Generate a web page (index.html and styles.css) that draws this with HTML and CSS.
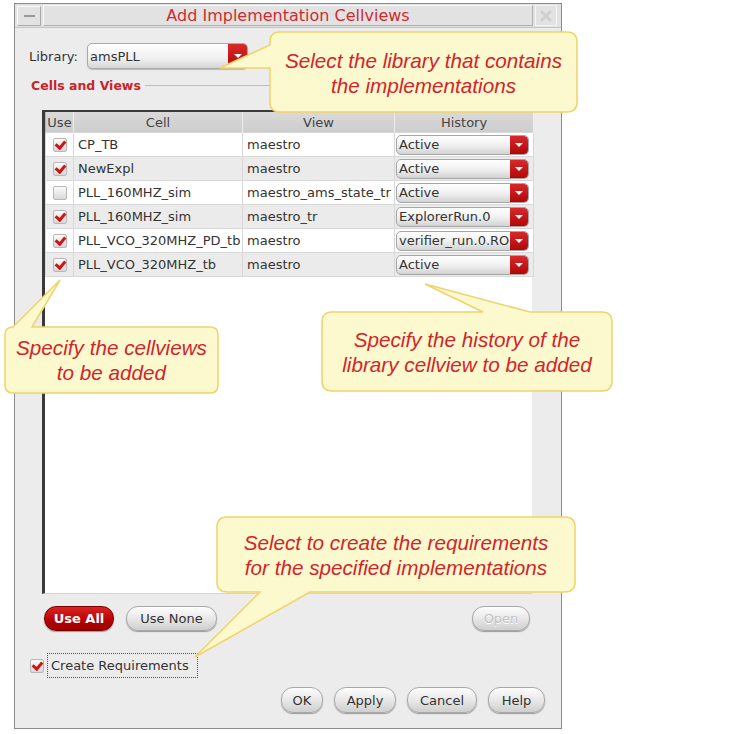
FILE: index.html
```html
<!DOCTYPE html>
<html lang="en">
<head>
    <meta charset="UTF-8">
    <title>Add Implementation Cellviews</title>
    <link rel="stylesheet" href="styles.css">
</head>
<body>
<div class="page">
    <div class="dialog">
        <div class="titlebar">
            <div class="min-btn"><span></span></div>
            <div class="title">Add Implementation Cellviews</div>
            <div class="close-btn">
                <svg width="20" height="20" viewBox="0 0 20 20"><path d="M5 5 L15 15 M15 5 L5 15" stroke="#cfcfcf" stroke-width="3"/></svg>
            </div>
        </div>

        <div class="lib-row">
            <span class="lib-label">Library:</span>
            <div class="combo">
                <span class="combo-text">amsPLL</span>
                <span class="arrow"></span>
            </div>
        </div>

        <div class="group-row">
            <span class="group-title">Cells and Views</span>
            <span class="group-line"></span>
        </div>

        <div class="table-wrap">
            <table class="cells">
                <tr>
                    <th class="c-use">Use</th>
                    <th class="c-cell">Cell</th>
                    <th class="c-view">View</th>
                    <th class="c-hist">History</th>
                </tr>
                <tr>
                    <td class="c-use"><span class="check on"></span></td>
                    <td>CP_TB</td>
                    <td>maestro</td>
                    <td class="c-hist"><div class="drop"><span>Active</span><span class="arrow"></span></div></td>
                </tr>
                <tr>
                    <td class="c-use"><span class="check on"></span></td>
                    <td>NewExpl</td>
                    <td>maestro</td>
                    <td class="c-hist"><div class="drop"><span>Active</span><span class="arrow"></span></div></td>
                </tr>
                <tr>
                    <td class="c-use"><span class="check"></span></td>
                    <td>PLL_160MHZ_sim</td>
                    <td>maestro_ams_state_tr</td>
                    <td class="c-hist"><div class="drop"><span>Active</span><span class="arrow"></span></div></td>
                </tr>
                <tr>
                    <td class="c-use"><span class="check on"></span></td>
                    <td>PLL_160MHZ_sim</td>
                    <td>maestro_tr</td>
                    <td class="c-hist"><div class="drop"><span>ExplorerRun.0</span><span class="arrow"></span></div></td>
                </tr>
                <tr>
                    <td class="c-use"><span class="check on"></span></td>
                    <td>PLL_VCO_320MHZ_PD_tb</td>
                    <td>maestro</td>
                    <td class="c-hist"><div class="drop"><span>verifier_run.0.RO</span><span class="arrow"></span></div></td>
                </tr>
                <tr>
                    <td class="c-use"><span class="check on"></span></td>
                    <td>PLL_VCO_320MHZ_tb</td>
                    <td>maestro</td>
                    <td class="c-hist"><div class="drop"><span>Active</span><span class="arrow"></span></div></td>
                </tr>
            </table>
        </div>

        <div class="btn-row">
            <button class="btn red use-all">Use All</button>
            <button class="btn use-none">Use None</button>
            <button class="btn disabled open">Open</button>
        </div>

        <div class="req-row">
            <span class="check on"></span>
            <span class="req-label">Create Requirements</span>
        </div>

        <div class="bottom-row">
            <button class="btn b-ok">OK</button>
            <button class="btn b-apply">Apply</button>
            <button class="btn b-cancel">Cancel</button>
            <button class="btn b-help">Help</button>
        </div>
    </div>

    <!-- callout bubbles -->
    <svg class="bubbles" width="750" height="734" viewBox="0 0 750 734">
        <path d="M280,32 H567 Q577,32 577,42 V102 Q577,112 567,112 H280 Q270,112 270,102 V68 L220,68 L270,45 V42 Q270,32 280,32 Z"/>
        <path d="M13,327 L60,280 L32,327 H210 Q218,327 218,335 V385 Q218,393 210,393 H13 Q5,393 5,385 V335 Q5,327 13,327 Z"/>
        <path d="M332,312 H483 L425,284 L530,312 H602 Q612,312 612,322 V381 Q612,391 602,391 H332 Q322,391 322,381 V322 Q322,312 332,312 Z"/>
        <path d="M227,517 H565 Q575,517 575,527 V582 Q575,592 565,592 H310 L195,657 L260,592 H227 Q217,592 217,582 V527 Q217,517 227,517 Z"/>
    </svg>
    <div class="note note-lib">Select the library that contains<br>the implementations</div>
    <div class="note note-cells">Specify the cellviews<br>to be added</div>
    <div class="note note-hist">Specify the history of the<br>library cellview to be added</div>
    <div class="note note-req">Select to create the requirements<br>for the specified implementations</div>
</div>
</body>
</html>
```

FILE: styles.css
```css
body {
    margin: 0;
    background: #fff;
    font-family: "DejaVu Sans", sans-serif;
    font-size: 13px;
    color: #333;
}
.page {
    position: relative;
    width: 750px;
    height: 734px;
    overflow: hidden;
}
.dialog {
    box-sizing: border-box;
    margin: 3px 0 0 14px;
    width: 548px;
    height: 726px;
    border: 1px solid #8c8c8c;
    background: #ececec;
    display: flex;
    flex-direction: column;
}
.titlebar {
    height: 24px;
    display: flex;
    align-items: stretch;
    background: #e2e2e2;
    border-bottom: 1px solid #c4c4c4;
    box-sizing: border-box;
}
.min-btn {
    width: 22px;
    margin: 2px 2px 1px 2px;
    border: 1px solid #fafafa;
    border-right-color: #a9a9a9;
    border-bottom-color: #a9a9a9;
    display: flex;
    align-items: center;
    justify-content: center;
}
.min-btn span {
    width: 11px;
    height: 2px;
    background: #9a9a9a;
}
.title {
    flex: 1;
    margin: 1px 0;
    border: 1px solid #f8f8f8;
    border-right-color: #b0b0b0;
    border-bottom-color: #b0b0b0;
    text-align: center;
    color: #cf2b2f;
    font-size: 16px;
    line-height: 20px;
}
.close-btn {
    width: 20px;
    margin: 1px 4px 1px 2px;
    border: 1px solid #f4f4f4;
    display: flex;
    align-items: center;
    justify-content: center;
}

.lib-row {
    margin-top: 15px;
    padding-left: 14px;
    height: 26px;
    display: flex;
    align-items: center;
}
.lib-label {
    width: 58px;
    color: #333;
}
.combo {
    box-sizing: border-box;
    width: 161px;
    height: 26px;
    border: 1px solid #a9a9a9;
    border-radius: 5px;
    background: linear-gradient(#ffffff, #f0f0f0 60%, #d6d6d6);
    display: flex;
    align-items: center;
    box-shadow: 0 1px 1px #bbb;
}
.combo-text {
    flex: 1;
    padding-left: 2px;
}
.arrow {
    position: relative;
    align-self: stretch;
    width: 19px;
    background: linear-gradient(#d92a2a, #b20606);
    border-radius: 0 4px 4px 0;
}
.arrow::after {
    content: "";
    position: absolute;
    left: 50%;
    top: 50%;
    margin: -2px 0 0 -4px;
    border-left: 4px solid transparent;
    border-right: 4px solid transparent;
    border-top: 4px solid #fff;
}

.group-row {
    margin-top: 9px;
    height: 14px;
    padding-left: 16px;
    display: flex;
    align-items: center;
}
.group-title {
    color: #c8242a;
    font-weight: bold;
    font-size: 12.5px;
}
.group-line {
    flex: 1;
    margin: 1px 6px 0 4px;
    border-top: 1px solid #bcbcbc;
}

.table-wrap {
    box-sizing: border-box;
    margin: 18px 0 0 27px;
    width: 490px;
    height: 484px;
    background: #fff;
    border-left: 3px solid #3a3a3a;
    border-top: 2px solid #3a3a3a;
    border-bottom: 1px solid #d4d4d4;
}
.cells {
    border-collapse: collapse;
    table-layout: fixed;
    width: 484px;
}
.cells th {
    height: 20px;
    padding: 0;
    background: linear-gradient(#d9d9d9, #cdcdcd);
    border-right: 1px solid #ededed;
    border-left: 1px solid #b4b4b4;
    font-weight: normal;
    color: #444;
    font-size: 13px;
}
.cells td {
    height: 23px;
    padding: 0 0 0 4px;
    border: 1px solid #d8d8d8;
    white-space: nowrap;
    overflow: hidden;
    color: #333;
}
.cells tr:nth-child(odd) td {
    background: #ebebeb;
}
.cells tr:nth-child(even) td {
    background: #fff;
}
.cells td.c-use {
    padding: 0;
    text-align: center;
    background: #e6e6e6;
}
.cells td.c-hist {
    padding: 0 1px;
}
.c-use { width: 27px; }
.c-cell { width: 168px; }
.c-view { width: 151px; }
.c-hist { width: 138px; }

.check {
    display: inline-block;
    position: relative;
    box-sizing: border-box;
    width: 14px;
    height: 14px;
    vertical-align: middle;
    border: 1px solid #b8b8b8;
    border-radius: 2px;
    background: linear-gradient(#fbfbfb, #d8d8d8);
}
.check.on::after {
    content: "";
    position: absolute;
    left: 3px;
    top: 0px;
    width: 4px;
    height: 7px;
    border-right: 3px solid #d01414;
    border-bottom: 3px solid #d01414;
    transform: rotate(40deg);
}

.drop {
    box-sizing: border-box;
    width: 133px;
    height: 20px;
    display: flex;
    align-items: center;
    border: 1px solid #a6a6a6;
    border-radius: 5px;
    background: linear-gradient(#ffffff, #efefef 55%, #d2d2d2);
    overflow: hidden;
}
.drop span:first-child {
    flex: 1;
    padding-left: 2px;
    overflow: hidden;
    white-space: nowrap;
}
.drop .arrow {
    flex: none;
    width: 18px;
}

.btn {
    box-sizing: border-box;
    height: 25px;
    padding: 0;
    border: 1px solid #a8a8a8;
    border-radius: 12px;
    background: linear-gradient(#fdfdfd, #e8e8e8 50%, #cfcfcf);
    box-shadow: 0 1px 1px #9a9a9a;
    font-family: "DejaVu Sans", sans-serif;
    font-size: 13px;
    color: #333;
}
.btn.red {
    background: linear-gradient(#dc2323, #b50202 60%, #9c0000);
    border-color: #7c0000;
    color: #fff;
    font-weight: bold;
}
.btn.disabled {
    color: #c2c2c2;
    text-shadow: 0 1px 0 #fff;
}
.btn-row {
    margin-top: 11px;
    display: flex;
    height: 26px;
    align-items: center;
}
.use-all { margin-left: 29px; width: 70px; }
.use-none { margin-left: 12px; width: 91px; }
.open { margin-left: auto; margin-right: 31px; width: 58px; }

.req-row {
    margin-top: 22px;
    height: 25px;
    display: flex;
    align-items: center;
    padding-left: 15px;
}
.req-label {
    box-sizing: border-box;
    margin-left: 3px;
    width: 151px;
    height: 25px;
    line-height: 23px;
    padding-left: 3px;
    border: 1px dotted #555;
    color: #333;
    white-space: nowrap;
}
.bottom-row {
    margin-top: 9px;
    display: flex;
    justify-content: flex-end;
    gap: 11px;
    padding-right: 16px;
}
.bottom-row .btn { height: 26px; }
.b-ok { width: 42px; }
.b-apply { width: 62px; }
.b-cancel { width: 70px; }
.b-help { width: 57px; }

.bubbles {
    position: absolute;
    left: 0;
    top: 0;
    pointer-events: none;
}
.bubbles path {
    fill: #fdf9cf;
    stroke: #f0d36a;
    stroke-width: 1.5;
}
.note {
    position: absolute;
    display: flex;
    align-items: center;
    justify-content: center;
    text-align: center;
    font-family: "Liberation Sans", Arial, sans-serif;
    font-style: italic;
    font-size: 20.7px;
    line-height: 25px;
    color: #d1252c;
}
.note-lib { left: 270px; top: 33px; width: 307px; height: 80px; }
.note-cells { left: 5px; top: 327px; width: 213px; height: 66px; }
.note-hist { left: 322px; top: 312px; width: 290px; height: 79px; }
.note-req { left: 217px; top: 517px; width: 358px; height: 75px; }
```
